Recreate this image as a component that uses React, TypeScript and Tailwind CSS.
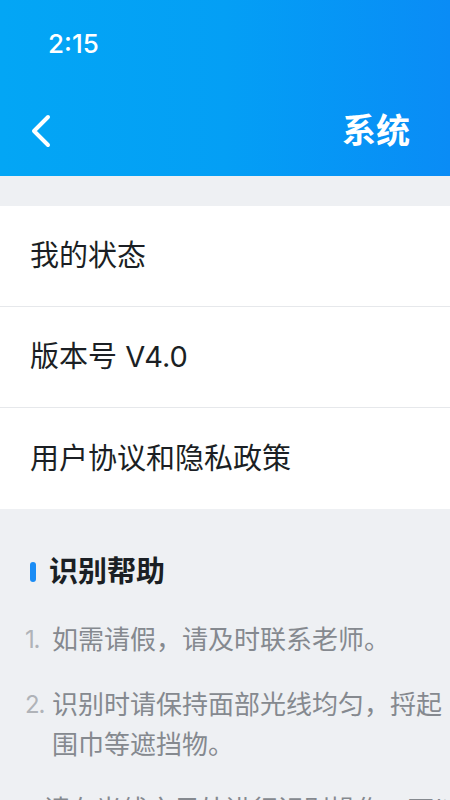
import React from 'react';

const font = { fontFamily: 'Inter, "Noto Sans CJK SC", "Noto Sans", sans-serif' };

const rows = ['我的状态', '版本号 V4.0', '用户协议和隐私政策'];

const tips: { n: string; lines: string[] }[] = [
  { n: '1.', lines: ['如需请假，请及时联系老师。'] },
  { n: '2.', lines: ['识别时请保持面部光线均匀，捋起', '围巾等遮挡物。'] },
  { n: '3.', lines: ['请在光线充足处进行识别操作，可以提高'] },
];

export default function App() {
  return (
    <div className="w-[450px] h-[800px] overflow-hidden bg-[#eef0f3]" style={font}>
      <div className="h-[176px] bg-gradient-to-r from-[#03a6f5] via-[#049ff5] to-[#0a8cf6] text-white flex flex-col">
        <div className="h-[90px] flex items-center pl-[48px] pb-[2px]">
          <span className="text-[26px] font-medium leading-none">2:15</span>
        </div>
        <div className="flex-1 flex items-center justify-between pl-[28px] pr-[40px] pb-[4px]">
          <svg width="28" height="36" viewBox="0 0 28 36" fill="none">
            <path d="M20 4 L6 18 L20 32" stroke="white" strokeWidth="4" strokeLinecap="round" strokeLinejoin="round" />
          </svg>
          <span className="text-[34px] font-bold leading-none">系统</span>
        </div>
      </div>

      <div className="mt-[30px] bg-white">
        {rows.map((r, i) => (
          <div
            key={r}
            className={`h-[101px] flex items-center pl-[30px] text-[29px] text-[#1b1f24] ${i < rows.length - 1 ? 'border-b border-[#e6e8eb]' : ''}`}
          >
            {r}
          </div>
        ))}
      </div>

      <div className="pt-[48px]">
        <div className="flex items-center pl-[30px] gap-[13px]">
          <div className="w-[6px] h-[20px] rounded-full bg-[#1a8cf5]" />
          <span className="text-[29px] font-bold text-[#1b1f24] leading-none">识别帮助</span>
        </div>
        <div className="mt-[34px] flex flex-col gap-[25px]">
          {tips.map((t) => (
            <div key={t.n} className="flex whitespace-nowrap">
              <span className="w-[52px] pl-[25px] text-[24px] text-[#b0b3b8] leading-[40px] tracking-tighter">{t.n}</span>
              <div className="flex flex-col">
                {t.lines.map((l) => (
                  <span key={l} className="text-[26px] text-[#85898f] leading-[40px]">{l}</span>
                ))}
              </div>
            </div>
          ))}
        </div>
      </div>
    </div>
  );
}
